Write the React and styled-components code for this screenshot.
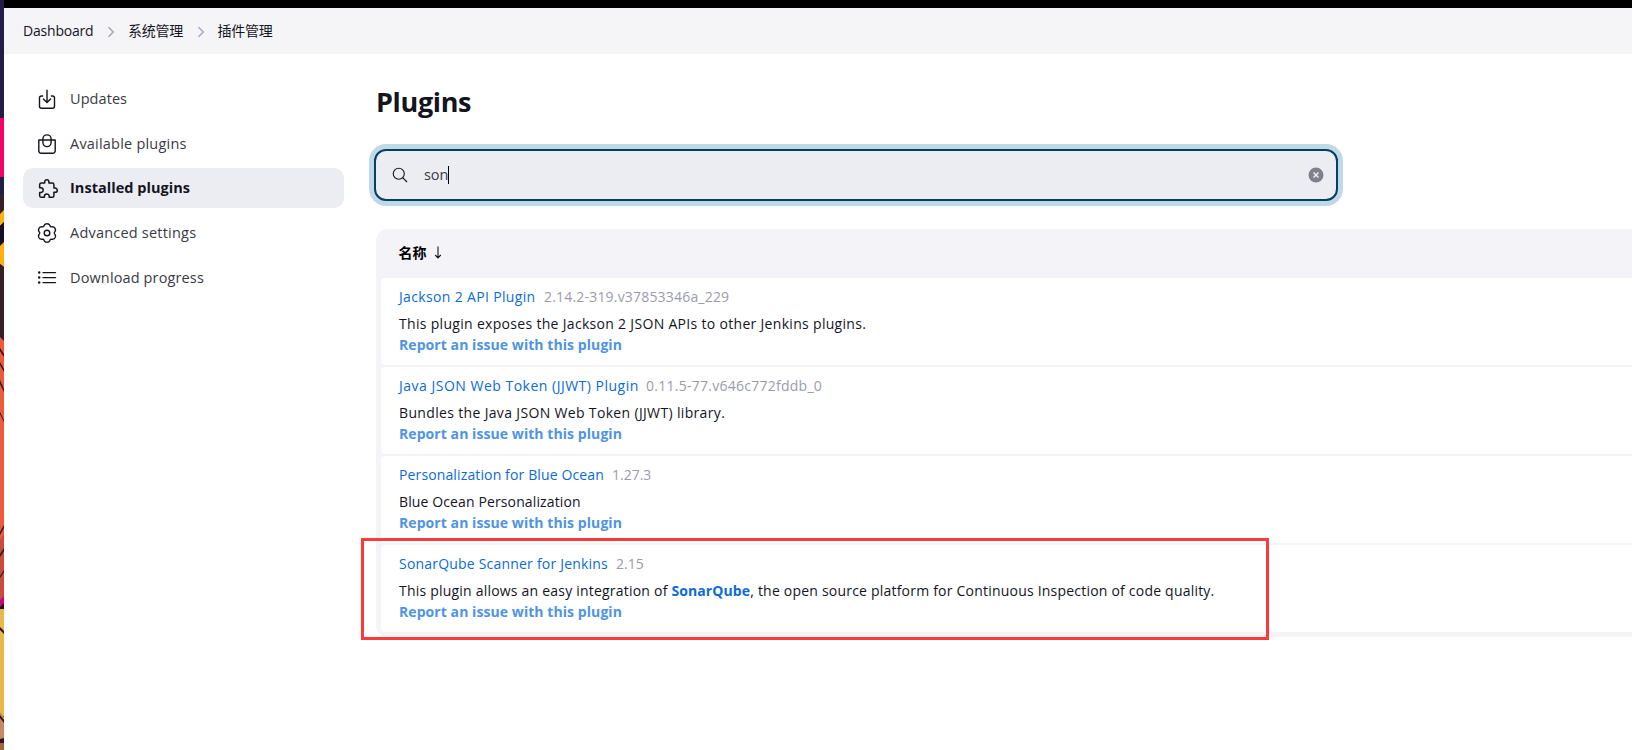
import React from "react";
import styled, { createGlobalStyle } from "styled-components";
import { IoSearchOutline } from "react-icons/io5";

const GlobalStyle = createGlobalStyle`
  *, *::before, *::after { box-sizing: border-box; }
  body {
    margin: 0;
    background: #fff;
    color: #14141f;
    font-family: "Open Sans", "Noto Sans", "Noto Sans CJK SC", sans-serif;
    font-size: 14px;
    overflow: hidden;
  }
`;

const Screen = styled.div`
  display: flex;
  width: 100vw;
  height: 100vh;
  overflow: hidden;
`;

const Wallpaper = styled.svg`
  flex: none;
  width: 4px;
  height: 750px;
  display: block;
`;

const Page = styled.div`
  flex: 1;
  min-width: 0;
  display: flex;
  flex-direction: column;
`;

const TopBar = styled.div`
  height: 8px;
  background: #000;
`;

const Breadcrumbs = styled.nav`
  height: 46px;
  display: flex;
  align-items: center;
  padding-left: 19px;
  background: #f5f5f8;
  line-height: 20px;
`;

const Crumb = styled.span`
  width: ${(p) => p.$width}px;
  white-space: nowrap;
  letter-spacing: ${(p) => p.$track || 0}px;
`;

const Separator = styled.svg`
  width: 8px;
  height: 12px;
  margin: 1px 13px 0 14px;
  fill: none;
  stroke: #a8a8bc;
  stroke-width: 1.5;
`;

const Columns = styled.div`
  display: flex;
  flex: 1;
  padding-left: 19px;
`;

const SidePanel = styled.aside`
  width: 321px;
  padding-top: 25px;
  display: flex;
  flex-direction: column;
  gap: 4.7px;
`;

const Task = styled.a`
  display: flex;
  align-items: center;
  height: 40px;
  padding-left: 14px;
  gap: 13px;
  border-radius: 10px;
  font-size: 14.5px;
  line-height: 20px;
  white-space: nowrap;
  letter-spacing: ${(p) => p.$track || 0}px;
  background: ${(p) => (p.$active ? "#ecedf3" : "transparent")};
  font-weight: ${(p) => (p.$active ? 700 : 400)};
  color: ${(p) => (p.$active ? "#14141f" : "#3a3a44")};
`;

const TaskIcon = styled.svg`
  flex: none;
  width: 20px;
  height: 20px;
  overflow: visible;
  fill: none;
  stroke: #14141f;
  stroke-width: ${(p) => p.$weight || 1.4};
  stroke-linecap: round;
  stroke-linejoin: round;
`;

const Main = styled.main`
  flex: 1;
  min-width: 0;
  margin-left: 32px;
  display: flex;
  flex-direction: column;
`;

const Title = styled.h1`
  margin: 30px 0 0;
  font-size: 27px;
  line-height: 36px;
  font-weight: 700;
  letter-spacing: -0.35px;
`;

const SearchBox = styled.div`
  flex: none;
  width: 964px;
  height: 52px;
  margin: 29px 0 0 -2px;
  padding: 0 12px 0 15px;
  display: flex;
  align-items: center;
  border: 2px solid #033f63;
  border-radius: 12px;
  box-shadow: 0 0 0 5px #c1d9e7;
  background: #ecedf2;

  > svg:first-child {
    width: 18px;
    height: 18px;
  }
`;

const Query = styled.span`
  margin-left: 15px;
  font-size: 14.5px;
  line-height: 20px;
  letter-spacing: -0.1px;
  color: #3a3a44;
`;

const Caret = styled.i`
  width: 1px;
  height: 18px;
  background: #000;
`;

const Clear = styled.svg`
  width: 16px;
  height: 16px;
  margin-left: auto;
`;

const Table = styled.section`
  position: relative;
  flex: none;
  margin-top: 28px;
  padding: 0 0 5px 5px;
  display: flex;
  flex-direction: column;
  border-radius: 12px 0 0 12px;
  background: #f3f3f8;
`;

const TableHead = styled.header`
  height: 49px;
  padding: 0 0 3px 17.5px;
  display: flex;
  align-items: center;
  font-weight: 700;
  color: #000;
`;

const SortArrow = styled.svg`
  width: 8px;
  height: 13px;
  margin: 1px 0 0 7px;
  fill: none;
  stroke: #14141f;
  stroke-width: 1.1;
`;

const Row = styled.article`
  height: 87px;
  padding: 8px 0 0 18px;
  border-radius: 4px 0 0 4px;
  background: #fff;
  white-space: nowrap;
  line-height: 21px;

  & + & {
    margin-top: 2px;
  }
`;

const Heading = styled.div`
  display: flex;
  margin-bottom: 6px;
`;

const Name = styled.a`
  color: #0b6bd8;
  width: ${(p) => p.$width}px;
  letter-spacing: ${(p) => p.$track || 0}px;
`;

const Version = styled.span`
  color: #9b9bae;
  letter-spacing: ${(p) => p.$track || 0}px;
`;

const Description = styled.div`
  color: #14141f;
  letter-spacing: ${(p) => p.$track || 0}px;

  a {
    font-weight: 700;
    letter-spacing: 0.1px;
    color: #0b6bd8;
  }
`;

const Report = styled.a`
  display: block;
  font-weight: 700;
  letter-spacing: 0.07px;
  color: #4f94e3;
`;

const Highlight = styled.div`
  position: absolute;
  left: -15px;
  top: 309px;
  width: 908px;
  height: 102px;
  border: 3px solid #fd3a3a;
`;

const UpdatesIcon = () => (
  <TaskIcon viewBox="0 0 20 20">
    <path d="M5.6 7H4.5a2 2 0 0 0-2 2v8.2a2 2 0 0 0 2 2h11a2 2 0 0 0 2-2V9a2 2 0 0 0-2-2h-1.1M6.4 9.9 10 13.5l3.6-3.6M10 1.2v12" />
  </TaskIcon>
);

const BagIcon = () => (
  <TaskIcon viewBox="0 0 20 20">
    <path d="M1.8 6h16.4v10.8a2.4 2.4 0 0 1-2.4 2.4H4.2a2.4 2.4 0 0 1-2.4-2.4zM5.9 8.5V5a4.1 4.1 0 0 1 8.2 0v3.5a4.1 4.1 0 0 1-8.2 0z" />
  </TaskIcon>
);

const PuzzleIcon = () => (
  <TaskIcon viewBox="-15 8 472 472" $weight={35}>
    <path d="M413.66 246.1H386a2 2 0 0 1-2-2v-77.24A38.86 38.86 0 0 0 345.14 128H267.9a2 2 0 0 1-2-2V98.34c0-27.14-21.5-49.86-48.64-50.33a49.53 49.53 0 0 0-50.4 49.51V126a2 2 0 0 1-2 2H87.62A39.74 39.74 0 0 0 48 167.62V238a2 2 0 0 0 2 2h26.91c29.37 0 53.68 25.48 54.09 54.85.42 29.87-23.51 57.15-53.29 57.15H50a2 2 0 0 0-2 2v70.38A39.74 39.74 0 0 0 87.62 464H158a2 2 0 0 0 2-2v-20.93c0-30.28 24.75-56.35 55-57.06 30.1-.7 57 20.31 57 50.28V462a2 2 0 0 0 2 2h71.14A38.86 38.86 0 0 0 384 425.14v-78a2 2 0 0 1 2-2h28.48c27.63 0 49.52-22.67 49.52-50.4s-23.2-48.64-50.34-48.64z" />
  </TaskIcon>
);

// Six rounded lobes, the first one pointing straight up.
const gearOutline =
  Array.from({ length: 96 }, (_, i) => {
    const angle = (i * Math.PI) / 48;
    const radius = 8.45 + 0.95 * Math.cos(6 * angle) - 0.2 * Math.cos(12 * angle);
    const x = 10 + radius * Math.sin(angle);
    const y = 10 - radius * Math.cos(angle);
    return `${i ? "L" : "M"}${x.toFixed(2)} ${y.toFixed(2)}`;
  }).join("") + "Z";

const SettingsIcon = () => (
  <TaskIcon viewBox="0 0 20 20">
    <path d={gearOutline} />
    <circle cx="10" cy="10" r="2.8" />
  </TaskIcon>
);

const ListIcon = () => (
  <TaskIcon viewBox="0 0 20 20">
    <path d="M6 4.6h12.5M6 9.6h12.5M6 14.6h12.5" />
    <path d="M2.2 4.6h.01M2.2 9.6h.01M2.2 14.6h.01" strokeWidth="2.5" />
  </TaskIcon>
);

const tasks = [
  { label: "Updates", icon: UpdatesIcon, track: 0.07 },
  { label: "Available plugins", icon: BagIcon, track: 0.21 },
  { label: "Installed plugins", icon: PuzzleIcon, track: 0.03, active: true },
  { label: "Advanced settings", icon: SettingsIcon, track: 0.21 },
  { label: "Download progress", icon: ListIcon, track: 0.13 },
];

const plugins = [
  {
    name: "Jackson 2 API Plugin",
    width: 145,
    version: "2.14.2-319.v37853346a_229",
    text: "This plugin exposes the Jackson 2 JSON APIs to other Jenkins plugins.",
    tracks: [0.34, 0.19, 0.31],
  },
  {
    name: "Java JSON Web Token (JJWT) Plugin",
    width: 247,
    version: "0.11.5-77.v646c772fddb_0",
    text: "Bundles the Java JSON Web Token (JJWT) library.",
    tracks: [0.5, 0.26, 0.34],
  },
  {
    name: "Personalization for Blue Ocean",
    width: 213,
    version: "1.27.3",
    text: "Blue Ocean Personalization",
    tracks: [0.13, 0, 0.12],
  },
  {
    name: "SonarQube Scanner for Jenkins",
    width: 217,
    version: "2.15",
    text: (
      <>
        This plugin allows an easy integration of <a>SonarQube</a>, the open source platform for
        Continuous Inspection of code quality.
      </>
    ),
    tracks: [0.2, 0, 0.21],
  },
];

const Chevron = () => (
  <Separator viewBox="0 0 8 12">
    <path d="M1.5 1.2 6.3 6 1.5 10.8" />
  </Separator>
);

export default function App() {
  return (
    <>
      <GlobalStyle />
      <Screen>
        <Wallpaper viewBox="0 0 4 750">
          <rect width="4" height="750" fill="#211d44" />
          <rect y="117" width="4" height="1" fill="#5a0a3c" />
          <rect y="118" width="4" height="59" fill="#f00566" />
          <rect y="195" width="4" height="20" fill="#3a1f2a" />
          <path d="M0 214 4 210v12l-4 4z" fill="#fdb010" />
          <path d="M0 226 4 222v20l-4 4z" fill="#15102a" />
          <path d="M0 246 4 242v25l-4-3z" fill="#fdb010" />
          <path d="M0 264 4 267v73l-4-3z" fill="#35202a" />
          <path d="M0 337 4 341v210l-4 3z" fill="#ee5a3c" />
          <path d="M0 348l4 6v3l-4-6zM0 362l4 7v3l-4-7zM0 380l4 9v3l-4-8zM0 412l4 8v2l-4-8z" fill="#33141c" />
          <path d="M0 540l4-6v66l-4 8z" fill="#c94c3c" />
          <path d="M0 532l4-7v3l-4 7zM0 554l4-6v3l-4 6zM0 576l4-6v2l-4 6z" fill="#33141c" />
          <path d="M0 600 4 596v8l-4 3z" fill="#c5087a" />
          <path d="M0 607 4 603v5l-4 2z" fill="#26101f" />
          <rect y="609" width="4" height="107" fill="#e9b948" />
          <path d="M0 627l4 4v3l-4-4z" fill="#33141c" />
          <path d="M0 712l4 5v23H0z" fill="#c98a62" />
          <path d="M0 715l4 5v3l-4-5zM0 739l4-1v4l-4 1z" fill="#33141c" />
          <rect y="743" width="4" height="7" fill="#a0653f" />
        </Wallpaper>
        <Page>
          <TopBar />
          <Breadcrumbs>
            <Crumb $width={70} $track={-0.2}>Dashboard</Crumb>
            <Chevron />
            <Crumb $width={54.5} $track={-0.25}>系统管理</Crumb>
            <Chevron />
            <Crumb $width={56} $track={-0.25}>插件管理</Crumb>
          </Breadcrumbs>
          <Columns>
            <SidePanel>
              {tasks.map(({ label, icon: Icon, track, active }) => (
                <Task key={label} $track={track} $active={active}>
                  <Icon />
                  <span>{label}</span>
                </Task>
              ))}
            </SidePanel>
            <Main>
              <Title>Plugins</Title>
              <SearchBox>
                <IoSearchOutline />
                <Query>son</Query>
                <Caret />
                <Clear viewBox="0 0 16 16">
                  <circle cx="8" cy="8" r="7.5" fill="#80808c" />
                  <path d="M5.5 5.5l5 5m0-5l-5 5" stroke="#ecedf2" strokeWidth="1.5" />
                </Clear>
              </SearchBox>
              <Table>
                <TableHead>
                  名称
                  <SortArrow viewBox="0 0 8 13">
                    <path d="M4 .5v11.5M1.2 9 4 12l2.8-3" />
                  </SortArrow>
                </TableHead>
                {plugins.map((p) => (
                  <Row key={p.name}>
                    <Heading>
                      <Name $width={p.width} $track={p.tracks[0]}>{p.name}</Name>
                      <Version $track={p.tracks[1]}>{p.version}</Version>
                    </Heading>
                    <Description $track={p.tracks[2]}>{p.text}</Description>
                    <Report>Report an issue with this plugin</Report>
                  </Row>
                ))}
                <Highlight />
              </Table>
            </Main>
          </Columns>
        </Page>
      </Screen>
    </>
  );
}
